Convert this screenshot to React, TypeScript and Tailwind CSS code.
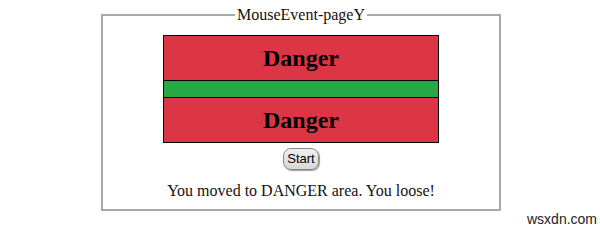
export default function App() {
  return (
    <div className="relative w-[600px] h-[229px] bg-white font-['Liberation_Serif',serif] text-black">
      <div className="pt-[6px] pl-[101px]">
        <fieldset className="w-[400px] border-2 border-[#a9a9a9] px-[10px] pb-[9px] pt-[11px]">
          <legend className="mx-auto px-[2px] text-[16px] leading-[18px] text-[#111]">MouseEvent-pageY</legend>
          <div className="mx-auto w-[276px] flex flex-col">
            <div className="h-[46px] bg-[#dc3545] border border-black flex items-center justify-center">
              <span className="text-[24px] font-bold leading-none">Danger</span>
            </div>
            <div className="h-[16px] bg-[#28a745] border-x border-black"></div>
            <div className="h-[46px] bg-[#dc3545] border border-black flex items-center justify-center">
              <span className="text-[24px] font-bold leading-none">Danger</span>
            </div>
          </div>
          <div className="flex justify-center mt-[5px]">
            <button className="h-[22px] px-[3px] rounded-[8px] border border-[#888] bg-gradient-to-b from-[#f0f0f0] to-[#d8d8d8] font-['Liberation_Sans',sans-serif] text-[13px] text-black shadow-[1px_1px_1px_#999]">
              Start
            </button>
          </div>
          <p className="mt-[12px] text-center text-[16px] leading-[18px] text-[#111]">
            You moved to DANGER area. You loose!
          </p>
        </fieldset>
      </div>
      <div className="absolute left-[527px] top-[209px] font-['Liberation_Sans',sans-serif] text-[14px] text-[#222]">
        wsxdn.com
      </div>
    </div>
  );
}
